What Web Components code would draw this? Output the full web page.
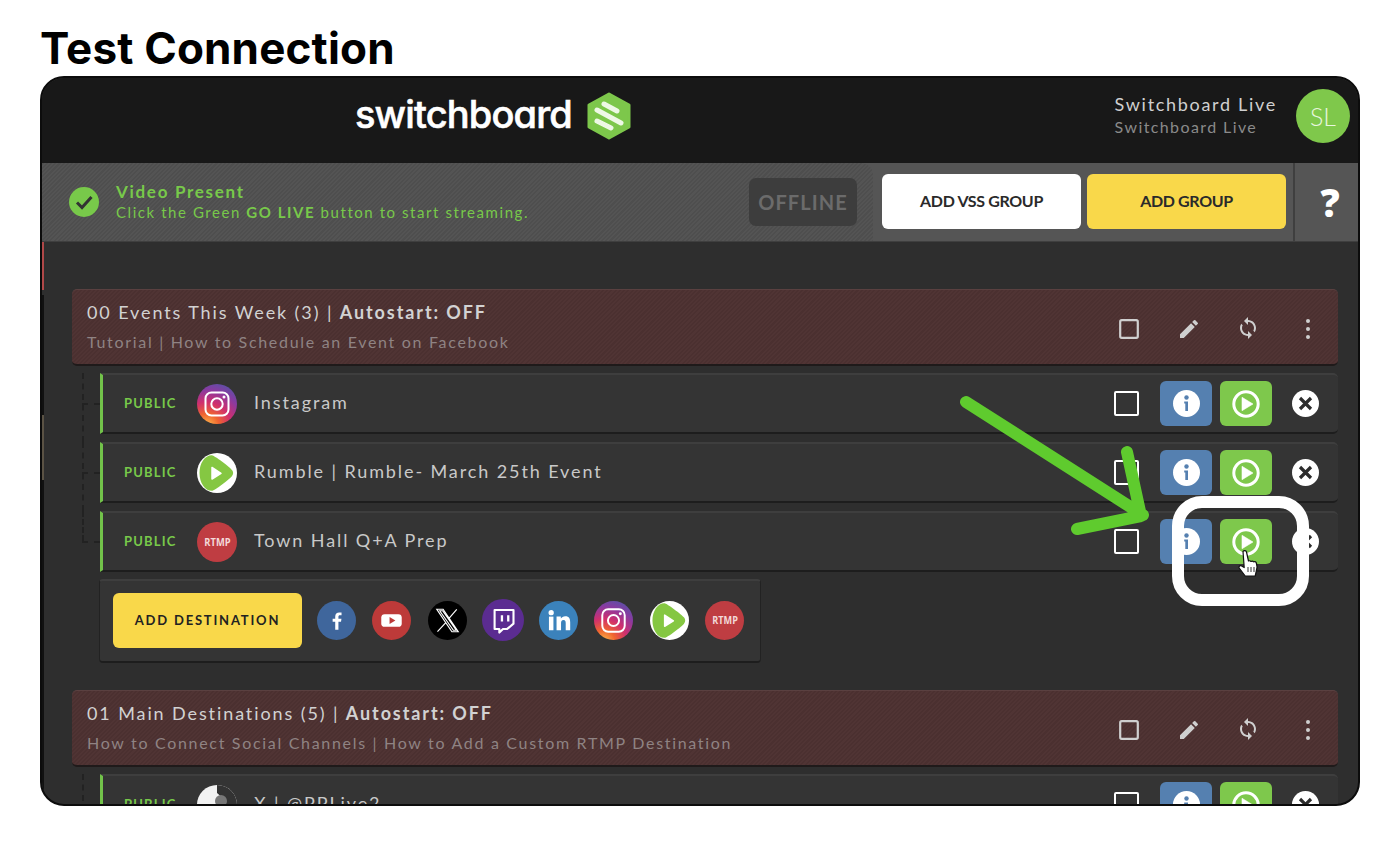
<!DOCTYPE html>
<html lang="en"><head><meta charset="utf-8"><title>Test Connection</title>
<style>
html,body{margin:0;background:#fff}
body{font-family:"Lato","Liberation Sans",sans-serif;width:1400px;height:846px;overflow:hidden}
</style></head><body>
<x-page>
  <x-frame>
    <x-topbar></x-topbar>
    <x-status></x-status>
    <x-main>
      <x-group-head sub="Tutorial | How to Schedule an Event on Facebook">00 Events This Week (3) | <b>Autostart: OFF</b></x-group-head>
      <x-dest icon="ig">Instagram</x-dest>
      <x-dest icon="rumble">Rumble | Rumble- March 25th Event</x-dest>
      <x-dest icon="rtmp" class="last">Town Hall Q+A Prep</x-dest>
      <x-add-dest></x-add-dest>
      <x-group-head class="second" sub="How to Connect Social Channels | How to Add a Custom RTMP Destination">01 Main Destinations (5) | <b>Autostart: OFF</b></x-group-head>
      <x-dest icon="photo">X | @PPLive2</x-dest>
    </x-main>
    <x-annotation></x-annotation>
  </x-frame>
</x-page>
<script>
const ICONS={
 fb:`<svg viewBox="0 0 40 40"><circle cx="20" cy="20" r="20" fill="#3f669c"/><path transform="translate(4.500 4.500) scale(.78)" d="M22.4 32V21.6h3.4l.6-4.1h-4v-2.4c0-1.2.4-2 2-2h2.1V9.4c-.4 0-1.700-.2-3.100-.2-3.100 0-5.200 1.900-5.200 5.300v3h-3.400v4.100h3.400V32z" fill="#fff"/></svg>`,
 yt:`<svg viewBox="0 0 40 40"><circle cx="20" cy="20" r="20" fill="#bd3a39"/><rect x="9.500" y="13.500" width="21" height="13" rx="3.500" fill="#fff"/><path d="M18 16.500v7l6-3.500z" fill="#bd3a39"/></svg>`,
 x:`<svg viewBox="0 0 40 40"><circle cx="20" cy="20" r="20" fill="#000"/><path d="M9 8.500h6.500L31 31.500h-6.500zM12 10l14 20h3L15 10zM29.500 8.500 21.300 18M18.500 22l-8.800 9.500" fill="none" stroke="#fff" stroke-width="1.200"/></svg>`,
 tw:`<svg viewBox="0 0 40 40"><circle cx="20" cy="20" r="20" fill="#5b2c91"/><path d="M12 10.500h18v13l-6 5h-4l-3.500 3.500v-3.500H12z" fill="none" stroke="#fff" stroke-width="2" stroke-linejoin="round"/><path d="M19 15.500v6M25 15.500v6" stroke="#fff" stroke-width="2.200"/></svg>`,
 li:`<svg viewBox="0 0 40 40"><circle cx="20" cy="20" r="20" fill="#3b82bb"/><circle cx="12.500" cy="12" r="2.700" fill="#fff"/><rect x="10.200" y="16" width="4.600" height="14" fill="#fff"/><path d="M18 16h4.400v2c.8-1.400 2.500-2.400 4.500-2.400 4.200 0 5.100 2.700 5.100 6.400v8h-4.600v-7c0-1.800-.3-3.400-2.300-3.400s-2.500 1.500-2.500 3.300V30H18z" fill="#fff"/></svg>`,
 ig:`<svg viewBox="0 0 40 40"><defs><radialGradient id="ig" cx="25%" cy="105%" r="120%"><stop offset="0" stop-color="#fdc04f"/><stop offset=".25" stop-color="#f0652f"/><stop offset=".5" stop-color="#cf2f6e"/><stop offset=".75" stop-color="#8a3aa0"/><stop offset="1" stop-color="#4f56a8"/></radialGradient></defs><circle cx="20" cy="20" r="20" fill="url(#ig)"/><rect x="8.500" y="8.500" width="23" height="23" rx="6" fill="none" stroke="#fff" stroke-width="2"/><circle cx="20" cy="20" r="5.700" fill="none" stroke="#fff" stroke-width="2"/><circle cx="27" cy="13" r="1.500" fill="#fff"/></svg>`,
 rumble:`<svg viewBox="0 0 40 40"><circle cx="20" cy="20" r="20" fill="#fff"/><path d="M2.500 20C2.500 10 8 2 15 2.200 17 2.300 33 14 35 17c1.500 2 1.500 4 0 6-2 3-18 15-20 14.800C8 38 2.500 30 2.500 20z" fill="#85c742"/><path d="M15 14.500V26l9-5.700z" fill="#fff" stroke="#fff" stroke-width="1.500" stroke-linejoin="round"/></svg>`,
 photo:`<svg viewBox="0 0 40 40"><circle cx="20" cy="20" r="20" fill="#f2f2f2"/><path d="M20 0a20 20 0 0 1 20 20 20 20 0 0 1-14 19L24 12c-1-2-3-3-4-4z" fill="#333"/><circle cx="24" cy="16" r="6" fill="#777"/></svg>`
};
function def(name,css,html){
  customElements.define(name,class extends HTMLElement{
    connectedCallback(){
      if(this.shadowRoot)return;
      const s=this.attachShadow({mode:'open'});
      s.innerHTML=`<style>${css}</style>`+(typeof html==='function'?html(this):html);
    }
  });
}
const hatch=(a,b)=>`repeating-linear-gradient(135deg,${a} 0 1.500px,${b} 1.500px 3px)`;

def('x-page',`:host{display:block;padding:20px 40px 0}
h1{margin:0;font:700 44px/56px Inter,"Liberation Sans",sans-serif;color:#000;letter-spacing:.17px}`,
`<h1>Test Connection</h1><slot></slot>`);

def('x-frame',`:host{display:block;position:relative;box-sizing:border-box;width:1320px;height:730px;border:2px solid #0c0c0c;border-radius:24px;overflow:hidden;background:#2e2e2e;font-family:Lato,"Liberation Sans",sans-serif}`,`<slot></slot>`);

def('x-topbar',`:host{display:flex;align-items:center;height:85px;background:#181818;box-sizing:border-box;padding-bottom:10px}
.logo{flex:none;margin-left:313px;display:flex;align-items:center;gap:14px;width:280px}
.word{font:500 38px/44px Inter,"Open Sans",sans-serif;font-feature-settings:"cv11" 1;color:#fff;letter-spacing:-.85px;-webkit-text-stroke:.6px #fff;margin-top:-3px;white-space:nowrap}
.user{margin-left:auto;text-align:left;margin-top:-1px}
.n{font-size:18px;line-height:24px;letter-spacing:1.7px;color:#d0d0d0}
.r{font-size:16px;line-height:22px;letter-spacing:1.4px;color:#8a8a8a}
.av{width:54px;height:54px;border-radius:50%;background:#7fc84b;color:#e8f6de;font-weight:300;font-size:25px;line-height:54px;text-align:center;margin:0 8px 0 19px}`,
`<div class="logo"><span class="word">switchboard</span>
<svg width="46" height="48" viewBox="0 0 46 48" style="flex:none"><path d="M23 2 43 13v22L23 46 3 35V13z" fill="#7dc74b" stroke="#7dc74b" stroke-width="3" stroke-linejoin="round"/><g stroke="#eef8e6" stroke-width="5" stroke-linecap="round"><path d="M18 12 31 19M11 18 35 31M11 29 25 36"/></g></svg></div>
<div class="user"><div class="n">Switchboard Live</div><div class="r">Switchboard Live</div></div><div class="av">SL</div>`);

def('x-status',`:host{display:flex;align-items:stretch;height:79px;background:#555;box-sizing:border-box;border-bottom:1px solid #3f3f3f}
.left{flex:none;width:831px;box-sizing:border-box;display:flex;align-items:center;padding:0 16px 0 27px;background:${hatch('#4e4e4e','#545454')};border-radius:0 12px 0 0}
.chk{flex:none;width:30px;height:30px;margin-right:17px}
.t{flex:1;color:#78c94a;margin-top:-2px}
.a{font-size:17px;line-height:21px;font-weight:700;letter-spacing:1.7px}
.b{font-size:15px;line-height:20px;letter-spacing:1.56px}
.off{flex:none;width:108px;height:48px;border-radius:7px;background:#3d3d3d;color:#6b6b6b;font-weight:700;font-size:20px;letter-spacing:1.1px;display:flex;align-items:center;justify-content:center;margin-top:-1px}
.btn{flex:none;width:199px;height:55px;align-self:center;border-radius:6px;display:flex;align-items:center;justify-content:center;color:#2a2a2a;font-size:16px;font-weight:700;letter-spacing:-.35px;margin-top:-2px;box-sizing:border-box;padding-bottom:2px}
.w{background:#fff;margin-left:9px}.y{background:#f9d84a;margin-left:6px}
.q{flex:1;margin-left:7px;border-left:2px solid #3f3f3f;display:flex;align-items:center;justify-content:center;padding-left:7px;color:#fff;font:800 38px/1 "Open Sans",sans-serif}
`,`<div class="left"><svg class="chk" viewBox="0 0 30 30"><circle cx="15" cy="15" r="15" fill="#78c94a"/><path d="M8 15.500l5 5L22.500 10" fill="none" stroke="#333" stroke-width="3"/></svg>
<div class="t"><div class="a">Video Present</div><div class="b">Click the Green <b>GO LIVE</b> button to start streaming.</div></div>
<div class="off">OFFLINE</div></div>
<div class="btn w">ADD VSS GROUP</div><div class="btn y">ADD GROUP</div><div class="q">?</div>`);

def('x-main',`:host{display:block;box-sizing:border-box;height:564px;padding:47px 20px 0 30px;position:relative;overflow:hidden}
.edge{position:absolute;left:0;top:0;width:2px;height:100%;background:linear-gradient(to bottom,#b04848 0 48px,#2e2e2e 48px 53px,#111 53px 173px,#5a5244 173px 238px,#111 238px)}`,`<div class="edge"></div><slot></slot>`);

def('x-group-head',`:host{display:flex;align-items:center;height:77px;box-sizing:border-box;margin-bottom:7px;padding:0 0 0 15px;border-radius:5px;background:${hatch('#4b3030','#503434')};border-top:1px solid #5a4040;border-bottom:2px solid #1f1a1a;color:#cfcfcf}
:host(.second){margin-top:27px;margin-bottom:7px}
.txt{flex:1;margin-top:-2px}
.a{font-size:18px;line-height:25px;letter-spacing:1.9px;color:#d2d2d2}
.s{font-size:16px;line-height:21px;margin-top:6px;letter-spacing:1.69px;color:#8f8383}
.ic{width:59.500px;display:flex;justify-content:center;flex:none;padding-top:3px}
svg{display:block}`,
h=>`<div class="txt"><div class="a"><slot></slot></div><div class="s">${h.getAttribute('sub')}</div></div>
<div class="ic" style="padding-left:1px"><svg width="20" height="20" viewBox="0 0 20 20"><rect x="1.200" y="1.200" width="17.600" height="17.600" rx="1.500" fill="none" stroke="#cfcfcf" stroke-width="2.200"/></svg></div>
<div class="ic"><svg width="24" height="24" viewBox="0 0 24 24"><path fill="#cfcfcf" d="M3 17.250V21h3.750L17.810 9.940l-3.750-3.750zM20.710 7.040a1 1 0 0 0 0-1.410l-2.340-2.340a1 1 0 0 0-1.410 0l-1.830 1.830 3.750 3.750z"/></svg></div>
<div class="ic" style="padding-top:1px"><svg width="24" height="24" viewBox="0 0 24 24"><path fill="#cfcfcf" d="M12 4V1L8 5l4 4V6c3.310 0 6 2.690 6 6 0 1.010-.25 1.970-.7 2.800l1.460 1.460A7.930 7.930 0 0 0 20 12c0-4.420-3.580-8-8-8zm0 14c-3.310 0-6-2.690-6-6 0-1.010.25-1.970.7-2.800L5.240 7.740A7.930 7.930 0 0 0 4 12c0 4.420 3.580 8 8 8v3l4-4-4-4z"/></svg></div>
<div class="ic" style="width:60px"><svg width="6" height="24" viewBox="0 0 6 24"><circle cx="3" cy="4" r="2" fill="#cfcfcf"/><circle cx="3" cy="12" r="2" fill="#cfcfcf"/><circle cx="3" cy="20" r="2" fill="#cfcfcf"/></svg></div>`);

def('x-plat',`:host{display:block;flex:none;width:var(--s,40px);height:var(--s,40px)}
:host([k=tw]){width:42px;height:42px;margin:0 -1.500px}
svg{display:block;width:100%;height:100%}
.r{width:100%;height:100%;border-radius:50%;background:#bf3d42;color:#f3d9d9;display:flex;align-items:center;justify-content:center;font:700 calc(var(--s,40px)*.275)/1 "Open Sans",sans-serif}`,
h=>{const k=h.getAttribute('k');return k==='rtmp'?`<div class="r"><span style="transform:scaleX(.85)">RTMP</span></div>`:ICONS[k]});

def('x-dest',`:host{display:flex;align-items:center;position:relative;height:61px;box-sizing:border-box;margin:0 0 8px 28px;background:#343434;border-left:3px solid #72c24a;border-top:2px solid #3e3e3e;border-bottom:2px solid #1d1d1d;border-radius:0 5px 5px 0;padding-left:21px}
.tree-v{position:absolute;left:-21px;top:-2px;height:69px;border-left:2px dashed #222}
:host(.last) .tree-v{height:30px}
.tree-h{position:absolute;left:-21px;top:28px;width:18px;border-top:2px dashed #222}
.p{width:73px;color:#78c94a;font-weight:700;font-size:13px;letter-spacing:1.2px;margin-top:-2px}
.n{flex:1;margin:-4px 0 0 17px;font-size:18px;letter-spacing:1.9px;color:#c9c9c9}
.cb{width:25px;height:25px;box-sizing:border-box;border:2.500px solid #fff;border-radius:2px;margin-right:21px}
.b{width:52px;height:45px;border-radius:6px;display:flex;align-items:center;justify-content:center}
.i{background:#5580b0;margin-right:8px}.g{background:#7ec84c;margin-right:20px}
.x{margin-right:19px}
svg{display:block}`,
h=>`<div class="tree-v"></div><div class="tree-h"></div><div class="p">PUBLIC</div><x-plat k="${h.getAttribute('icon')}"></x-plat><div class="n"><slot></slot></div>
<div class="cb"></div>
<div class="b i"><svg width="27" height="27" viewBox="0 0 27 27"><circle cx="13.500" cy="13.500" r="13.500" fill="#fff"/><circle cx="13.500" cy="7.500" r="2.200" fill="#5580b0"/><path d="M11.200 11.500h3.800V21h-2.700v-7.500h-1.100z" fill="#5580b0"/></svg></div>
<div class="b g"><svg width="28" height="28" viewBox="0 0 28 28"><circle cx="14" cy="14" r="12.200" fill="none" stroke="#fff" stroke-width="3"/><path d="M10 7.300v13.400L21 14z" fill="#fff" stroke="#fff" stroke-width=".6" stroke-linejoin="round"/></svg></div>
<svg class="x" width="27" height="27" viewBox="0 0 27 27"><circle cx="13.500" cy="13.500" r="13.500" fill="#fff"/><path d="M8 8l11 11M19 8 8 19" stroke="#2c2c2c" stroke-width="3.200"/></svg>`);

def('x-add-dest',`:host{display:flex;align-items:center;gap:16.500px;width:662px;height:84px;box-sizing:border-box;margin:-1px 0 0 27px;padding:0 15px 2px 13px;background:#343434;border-top:2px solid #3e3e3e;border-bottom:2px solid #1d1d1d;border-left:1px solid #222;border-right:1px solid #222;border-radius:4px;--s:39px}
.btn{flex:none;width:189px;height:55px;background:#f9d84a;border-radius:6px;display:flex;align-items:center;justify-content:center;color:#222;font-size:13px;font-weight:700;letter-spacing:1.8px;margin-right:-1.600px}`,
`<div class="btn">ADD DESTINATION</div><x-plat k="fb"></x-plat><x-plat k="yt"></x-plat><x-plat k="x"></x-plat><x-plat k="tw"></x-plat><x-plat k="li"></x-plat><x-plat k="ig"></x-plat><x-plat k="rumble"></x-plat><x-plat k="rtmp"></x-plat>`);

def('x-annotation',`:host{position:absolute;left:-42px;top:-78px;width:1400px;height:846px;pointer-events:none;display:block}
svg{position:absolute;left:0;top:0}`,
`<svg width="1400" height="846" viewBox="0 0 1400 846">
<g fill="none" stroke="#5fcb2e" stroke-width="12" stroke-linecap="round" stroke-linejoin="round"><path d="M966 402 1143 515M1127 452 1141 516 1077 529"/></g>
<rect x="1178" y="502" width="125" height="98" rx="24" fill="none" stroke="#fff" stroke-width="12"/>
<path d="M1243 551.500c1-1.500 3-1 3.500.5l2 9c1-.5 2 0 2.500.5.700-.5 2-.5 2.700.3 1-.4 2-.2 2.500.7 1.200 3 1 6 0 9l-1 4.500h-10l-6-8c-.8-1.500 1-3 2.500-2l2.500 1.500z" fill="#fff" stroke="#111" stroke-width="1.200" stroke-linejoin="round"/>
<path d="M1248 567v5M1251 567v5M1254 567v5" stroke="#333" stroke-width="1"/>
</svg>`);
</script>
</body></html>
